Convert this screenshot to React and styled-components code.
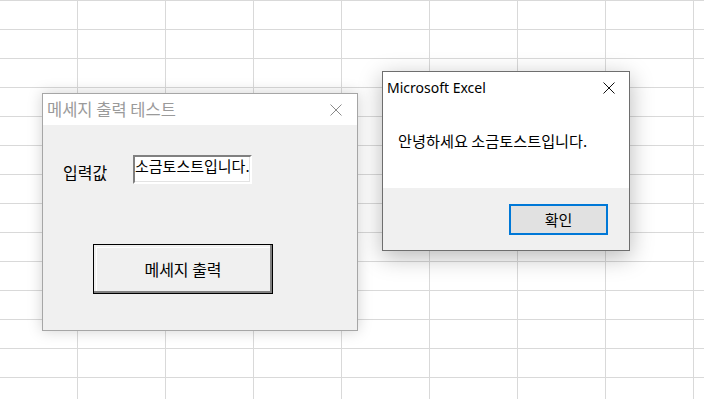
import React from 'react';
import styled, { createGlobalStyle } from 'styled-components';

const GlobalStyle = createGlobalStyle`
    html, body {
        margin: 0;
        padding: 0;
        background: #ffffff;
    }
    body {
        font-family: "Noto Sans CJK KR", "Noto Sans", sans-serif;
    }
`;

const korean = `"Noto Sans CJK KR", "Noto Sans", sans-serif`;
const segoe = `"Segoe UI", "Noto Sans", "Noto Sans CJK KR", sans-serif`;

const App = () => {
    return (
        <Sheet>
            <GlobalStyle />

            <UserForm>
                <FormTitleBar>
                    <FormTitle>메세지 출력 테스트</FormTitle>
                    <CloseIcon color="#8a8a8a" />
                </FormTitleBar>
                <FormBody>
                    <InputRow>
                        <FieldLabel>입력값</FieldLabel>
                        <TextBox>소금토스트입니다.</TextBox>
                    </InputRow>
                    <ClassicButton>메세지 출력</ClassicButton>
                </FormBody>
            </UserForm>

            <MsgBox>
                <MsgTitleBar>
                    <MsgTitle>Microsoft Excel</MsgTitle>
                    <CloseIcon color="#111111" />
                </MsgTitleBar>
                <MsgText>안녕하세요 소금토스트입니다.</MsgText>
                <MsgFooter>
                    <OkButton>확인</OkButton>
                </MsgFooter>
            </MsgBox>
        </Sheet>
    )
};

const CloseIcon = ({ color }) => (
    <CloseWrap>
        <svg width="12" height="12" viewBox="0 0 12 12">
            <path d="M0.5 0.5 L11.5 11.5 M11.5 0.5 L0.5 11.5" stroke={color} strokeWidth="1" fill="none" />
        </svg>
    </CloseWrap>
);


const Sheet = styled.div`
    position: relative;
    width: 704px;
    height: 399px;
    overflow: hidden;
    background-color: #ffffff;
    background-image:
        linear-gradient(to right, #d9d9d9 1px, transparent 1px),
        linear-gradient(to bottom, #d9d9d9 1px, transparent 1px);
    background-size: 88px 100%, 100% 29px;
    background-position: 77px 0, 0 0;
`;

const CloseWrap = styled.span`
    display: flex;
    width: 12px;
    height: 12px;
`;

/* the VBA user form, a window on the sheet */
const UserForm = styled.div`
    position: absolute;
    left: 42px;
    top: 93px;
    width: 316px;
    height: 238px;
    box-sizing: border-box;
    border: 1px solid #a6a6a6;
    background: #f0f0f0;
    box-shadow: 0 0 14px rgba(0, 0, 0, 0.18);
    display: flex;
    flex-direction: column;
`;

const FormTitleBar = styled.div`
    height: 31px;
    flex: none;
    background: #ffffff;
    display: flex;
    align-items: center;
    justify-content: space-between;
    padding: 0 15px 0 4px;
`;

const FormTitle = styled.span`
    font-family: ${korean};
    font-size: 16.5px;
    color: #9a9a9a;
    line-height: 1;
`;

const FormBody = styled.div`
    flex: 1;
    display: flex;
    flex-direction: column;
    align-items: flex-start;
    padding: 30px 0 0 20px;
    gap: 60px;
`;

const InputRow = styled.div`
    display: flex;
    align-items: center;
`;

const FieldLabel = styled.span`
    width: 70px;
    font-family: ${korean};
    font-size: 16px;
    color: #000000;
    padding-top: 5px;
`;

const TextBox = styled.div`
    width: 119px;
    height: 29px;
    box-sizing: border-box;
    background: #ffffff;
    border-top: 2px solid #808080;
    border-left: 2px solid #808080;
    border-right: 2px solid #ffffff;
    border-bottom: 2px solid #ffffff;
    box-shadow: inset -1px -1px 0 #e3e3e3;
    font-family: ${korean};
    font-size: 15px;
    line-height: 17px;
    color: #000000;
    white-space: nowrap;
    overflow: hidden;
    padding: 0;
`;

const ClassicButton = styled.button`
    margin-left: 30px;
    width: 180px;
    height: 50px;
    box-sizing: border-box;
    background: #f0f0f0;
    border: 1px solid #000000;
    box-shadow:
        inset -2px -2px 0 #808080,
        inset 2px 2px 0 #f0f0f0,
        inset 3px 3px 0 #ffffff;
    font-family: ${korean};
    font-size: 16px;
    color: #000000;
    padding: 0;
`;

/* the MsgBox dialog */
const MsgBox = styled.div`
    position: absolute;
    left: 382px;
    top: 71px;
    width: 248px;
    height: 180px;
    box-sizing: border-box;
    border: 1px solid #6e6e6e;
    background: #ffffff;
    box-shadow: 0 6px 22px rgba(0, 0, 0, 0.28);
    display: flex;
    flex-direction: column;
`;

const MsgTitleBar = styled.div`
    height: 31px;
    flex: none;
    display: flex;
    align-items: center;
    justify-content: space-between;
    padding: 0 14px 0 4px;
`;

const MsgTitle = styled.span`
    font-family: ${segoe};
    font-size: 14px;
    color: #000000;
`;

const MsgText = styled.div`
    flex: 1;
    display: flex;
    align-items: center;
    padding: 0 0 12px 15px;
    font-family: ${korean};
    font-size: 15.2px;
    color: #000000;
`;

const MsgFooter = styled.div`
    height: 62px;
    flex: none;
    background: #f0f0f0;
    display: flex;
    align-items: center;
    justify-content: flex-end;
    padding-right: 21px;
`;

const OkButton = styled.button`
    width: 99px;
    height: 31px;
    box-sizing: border-box;
    background: #e1e1e1;
    border: 2px solid #0078d7;
    font-family: ${korean};
    font-size: 15px;
    color: #000000;
    padding: 0;
`;

export default App;
